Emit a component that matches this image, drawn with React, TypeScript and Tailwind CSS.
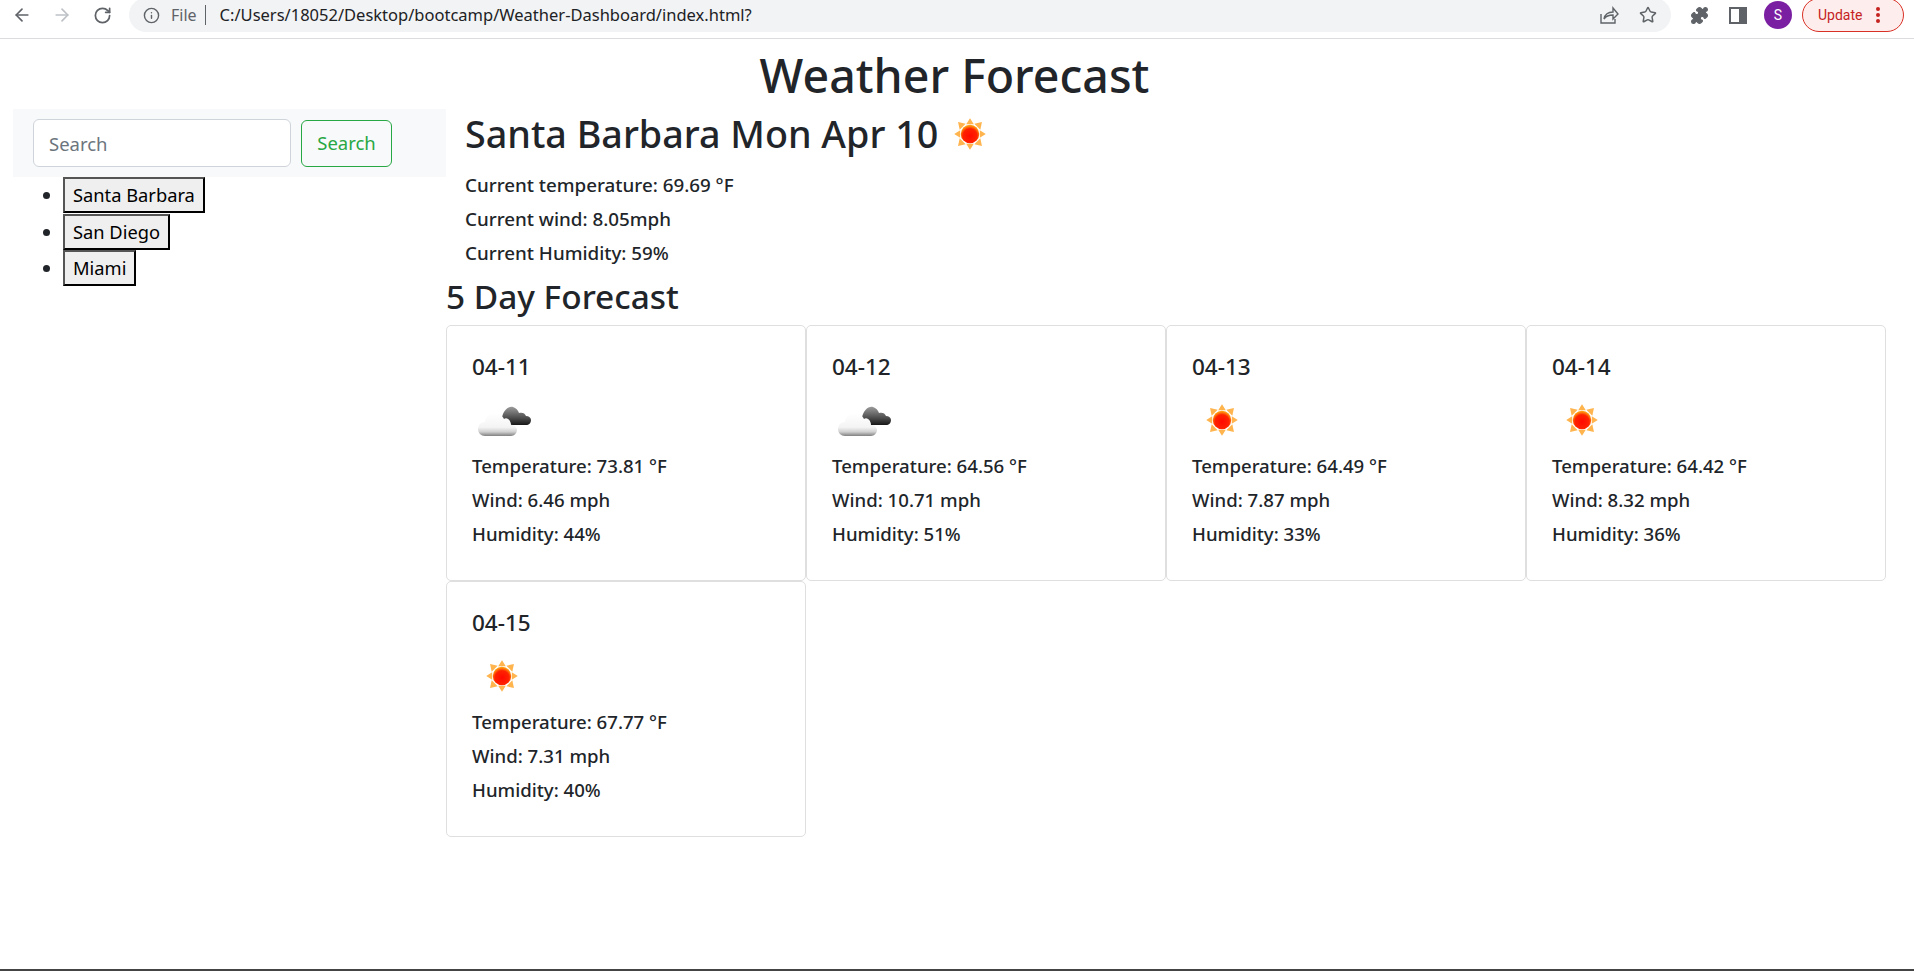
import React from "react";
import { ArrowLeft, ArrowRight, RotateCw, Info, Star, Puzzle } from "lucide-react";

const forecast = [
  { date: "04-11", icon: "cloud", temp: "73.81", wind: "6.46", humidity: "44" },
  { date: "04-12", icon: "cloud", temp: "64.56", wind: "10.71", humidity: "51" },
  { date: "04-13", icon: "sun", temp: "64.49", wind: "7.87", humidity: "33" },
  { date: "04-14", icon: "sun", temp: "64.42", wind: "8.32", humidity: "36" },
  { date: "04-15", icon: "sun", temp: "67.77", wind: "7.31", humidity: "40" },
];

const cities = ["Santa Barbara", "San Diego", "Miami"];

function SunIcon({ id }: { id: string }) {
  return (
    <svg width="50" height="50" viewBox="2 2 46 46">
      <defs>
        <radialGradient id={id} cx="50%" cy="60%" r="55%">
          <stop offset="0%" stopColor="#ff0a00" />
          <stop offset="70%" stopColor="#ff2200" />
          <stop offset="100%" stopColor="#ff9a10" />
        </radialGradient>
      </defs>
      <g fill="#ffb44d">
        <polygon points="25,10.5 28.5,16 21.5,16" />
        <polygon points="25,39.5 28.5,34 21.5,34" />
        <polygon points="10.5,25 16,21.5 16,28.5" />
        <polygon points="39.5,25 34,21.5 34,28.5" />
        <polygon points="14,14 21,15.5 15.5,21" />
        <polygon points="36,14 29,15.5 34.5,21" />
        <polygon points="14,36 21,34.5 15.5,29" />
        <polygon points="36,36 29,34.5 34.5,29" />
      </g>
      <circle cx="25" cy="25" r="8.5" fill={`url(#${id})`} />
    </svg>
  );
}

function CloudIcon({ id }: { id: string }) {
  return (
    <svg width="60" height="50" viewBox="0 0 60 50">
      <defs>
        <linearGradient id={`${id}-w`} x1="0" y1="0" x2="0" y2="1">
          <stop offset="0%" stopColor="#ffffff" />
          <stop offset="62%" stopColor="#f4f4f4" />
          <stop offset="82%" stopColor="#d0d0d0" />
          <stop offset="100%" stopColor="#808080" />
        </linearGradient>
        <linearGradient id={`${id}-d`} x1="0" y1="0" x2="0" y2="1">
          <stop offset="0%" stopColor="#9a9a9a" />
          <stop offset="65%" stopColor="#484848" />
          <stop offset="100%" stopColor="#161616" />
        </linearGradient>
      </defs>
      <path
        d="M27 21c1-7 6-12 11-11 3 1 5 3 6 6 3-1 6 0 7 3 3 0 5 2 5 4 0 3-2 5-5 5H38c-5 0-11-2-11-7z"
        fill={`url(#${id}-d)`}
      />
      <path
        d="M10 39c-4 0-7-3-7-7 0-4 3-7 7-7 1-6 5-9 9-9 4 0 8 2 10 6 1-1 3-1 4 0 2 1 3 4 3 6 3 0 6 2 6 5 0 3-3 6-6 6H10z"
        fill={`url(#${id}-w)`}
      />
    </svg>
  );
}

function BrowserBar() {
  return (
    <div className="flex h-[39px] shrink-0 items-center border-b border-[#dadce0] bg-white pb-[8px]">
      <ArrowLeft className="ml-[12px] h-[20px] w-[20px] text-[#5f6368]" strokeWidth={2} />
      <ArrowRight className="ml-[20px] h-[20px] w-[20px] text-[#bdc1c6]" strokeWidth={2} />
      <RotateCw className="ml-[21px] h-[19px] w-[19px] text-[#5f6368]" strokeWidth={2.2} />
      <div className="ml-[17px] flex h-[34px] w-[1542px] items-center rounded-full bg-[#f1f3f4] px-[14px]">
        <Info className="h-[17px] w-[17px] text-[#5f6368]" strokeWidth={2} />
        <span className="ml-[11px] text-[16px] text-[#5f6368]">File</span>
        <span className="ml-[8px] h-[20px] w-px bg-[#5f6368]" />
        <span className="ml-[14px] text-[16.5px] text-[#202124]">
          C:/Users/18052/Desktop/bootcamp/Weather-Dashboard/index.html?
        </span>
        <svg className="ml-auto" width="20" height="20" viewBox="0 0 20 20" fill="none" stroke="#5f6368" strokeWidth="1.4">
          <path d="M2 9v9h14v-4" />
          <path d="M5 14c1-5 5-7 9-7V3l5 6-5 5v-4c-4 0-7 1-9 4z" />
        </svg>
        <Star className="ml-[20px] h-[18px] w-[18px] text-[#5f6368]" strokeWidth={2} />
      </div>
      <Puzzle className="ml-[19px] h-[19px] w-[19px] fill-[#5f6368] text-[#5f6368]" strokeWidth={1.5} />
      <div className="ml-[20px] flex h-[17px] w-[18px] justify-end border-2 border-[#5f6368]">
        <div className="w-[6px] bg-[#5f6368]" />
      </div>
      <div className="ml-[17px] flex h-[28px] w-[28px] items-center justify-center rounded-full bg-[#7b1fa2] font-['Roboto',sans-serif] text-[14px] text-white">
        S
      </div>
      <div className="ml-[10px] flex h-[34px] w-[102px] items-center rounded-full border border-[#d93025] bg-[#fdeeed] pl-[15px] font-['Roboto',sans-serif] text-[14px] text-[#c5221f]">
        Update
        <span className="ml-[14px] flex flex-col gap-[2px]">
          <span className="h-[4px] w-[4px] rounded-full bg-[#c5221f]" />
          <span className="h-[4px] w-[4px] rounded-full bg-[#c5221f]" />
          <span className="h-[4px] w-[4px] rounded-full bg-[#c5221f]" />
        </span>
      </div>
    </div>
  );
}

function ForecastCard({ day }: { day: (typeof forecast)[number] }) {
  return (
    <div className="h-[256px] rounded-[5px] border border-[#dfdfdf] px-[25px] pt-[26px]">
      <h5 className="text-[22.5px] leading-[29px] font-medium text-[#212529]">{day.date}</h5>
      <div className="mt-[14px] flex h-[50px] items-center">
        {day.icon === "cloud" ? (
          <span className="mt-[4px] ml-[3px]">
            <CloudIcon id={`cloud-${day.date}`} />
          </span>
        ) : (
          <span className="ml-[5px]">
            <SunIcon id={`sun-${day.date}`} />
          </span>
        )}
      </div>
      <div className="mt-[9px] flex flex-col gap-[10px] text-[18.6px] leading-[24px] font-medium text-[#212529]">
        <p>Temperature: {day.temp} °F</p>
        <p>Wind: {day.wind} mph</p>
        <p>Humidity: {day.humidity}%</p>
      </div>
    </div>
  );
}

export default function App() {
  return (
    <div className="flex h-[971px] flex-col overflow-hidden border-b-2 border-[#444] bg-white font-['Noto_Sans',sans-serif] text-[#212529]">
      <BrowserBar />
      <h1 className="mt-[7px] pr-[5px] text-center text-[46.5px] leading-[58px] font-[550]">Weather Forecast</h1>
      <div className="mt-[5px] flex">
        <aside className="ml-[13px] w-[433px] shrink-0">
          <div className="flex h-[68px] items-center gap-[10px] bg-[#f8f9fa] pl-[20px]">
            <input
              placeholder="Search"
              className="h-[48px] w-[258px] rounded-[6px] border border-[#ced4da] bg-white px-[15px] text-[18.5px] placeholder:text-[#6c757d]"
            />
            <button className="h-[47px] w-[91px] rounded-[6px] border border-[#28a745] text-[18.5px] text-[#28a745]">
              Search
            </button>
          </div>
          <ul className="list-disc pl-[50px] text-[18.3px] leading-[24px] marker:text-[#212529]">
            {cities.map((city) => (
              <li key={city} className="h-[36.5px]">
                <button className="h-[36px] border-2 border-t-[#555] border-r-black border-b-black border-l-[#555] bg-[#efefef] px-[8px] text-black">
                  {city}
                </button>
              </li>
            ))}
          </ul>
        </aside>
        <main className="w-[1440px]">
          <div className="pl-[19px]">
            <h2 className="flex items-center text-[37.7px] leading-[48px] font-medium">
              Santa Barbara Mon Apr 10
              <span className="ml-[7px]">
                <SunIcon id="sun-today" />
              </span>
            </h2>
            <div className="mt-[14px] flex flex-col gap-[10px] text-[18.8px] leading-[24px] font-medium">
              <p>Current temperature: 69.69 °F</p>
              <p>Current wind: 8.05mph</p>
              <p>Current Humidity: 59%</p>
            </div>
          </div>
          <h2 className="mt-[10px] text-[33.4px] leading-[43px] font-medium">5 Day Forecast</h2>
          <div className="mt-[7px] grid grid-cols-4">
            {forecast.map((day) => (
              <ForecastCard key={day.date} day={day} />
            ))}
          </div>
        </main>
      </div>
    </div>
  );
}
